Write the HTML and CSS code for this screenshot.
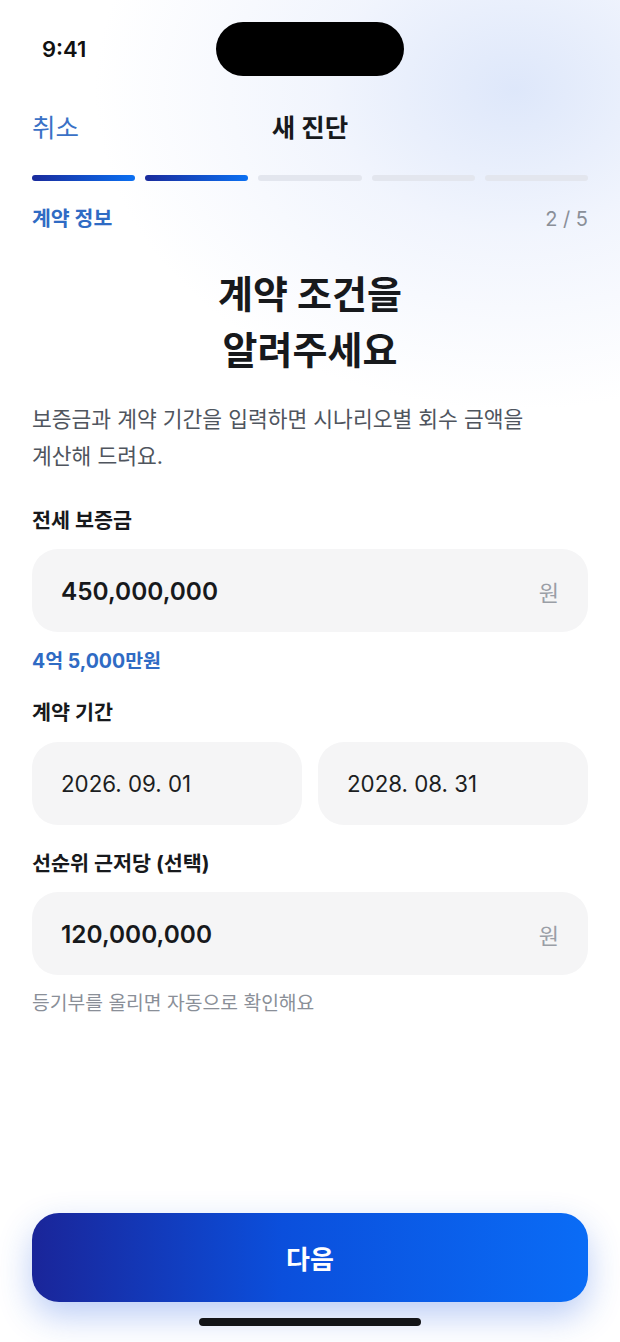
FILE: index.html
```html
<!DOCTYPE html>
<html lang="ko">
<head>
  <meta charset="UTF-8">
  <meta name="viewport" content="width=device-width, initial-scale=1.0">
  <title>새 진단</title>
  <link rel="stylesheet" href="styles.css">
</head>
<body>

  <div class="screen">
    <div class="status-bar">
      <span class="time">9:41</span>
      <div class="island"></div>
      <span></span>
    </div>

    <header class="nav">
      <a href="#" class="nav-cancel">취소</a>
      <h1 class="nav-title">새 진단</h1>
      <span></span>
    </header>

    <div class="progress">
      <span class="step done"></span>
      <span class="step done"></span>
      <span class="step"></span>
      <span class="step"></span>
      <span class="step"></span>
    </div>

    <div class="step-row">
      <span class="step-name">계약 정보</span>
      <span class="step-count">2 / 5</span>
    </div>

    <h2 class="headline">계약 조건을<br>알려주세요</h2>

    <p class="lead">보증금과 계약 기간을 입력하면 시나리오별 회수 금액을<br>계산해 드려요.</p>

    <form class="fields">
      <div class="field">
        <label class="field-label">전세 보증금</label>
        <div class="input-box">
          <span class="input-value">450,000,000</span>
          <span class="unit">원</span>
        </div>
        <p class="hint hint-blue">4억 5,000만원</p>
      </div>

      <div class="field">
        <label class="field-label">계약 기간</label>
        <div class="date-row">
          <div class="input-box"><span class="date-value">2026. 09. 01</span></div>
          <div class="input-box"><span class="date-value">2028. 08. 31</span></div>
        </div>
      </div>

      <div class="field">
        <label class="field-label">선순위 근저당 (선택)</label>
        <div class="input-box">
          <span class="input-value">120,000,000</span>
          <span class="unit">원</span>
        </div>
        <p class="hint">등기부를 올리면 자동으로 확인해요</p>
      </div>
    </form>

    <footer class="bottom">
      <button type="button" class="next-btn">다음</button>
      <div class="home-indicator"></div>
    </footer>
  </div>

</body>
</html>
```

FILE: styles.css
```css
* {
  margin: 0;
  padding: 0;
  box-sizing: border-box;
}

body {
  font-family: "Inter", "Noto Sans CJK KR", sans-serif;
  color: #17191c;
  background-color: #fff;
}

.screen {
  width: 620px;
  height: 1342px;
  display: flex;
  flex-direction: column;
  overflow: hidden;
  background:
    radial-gradient(ellipse 420px 320px at 515px 90px, rgba(220, 230, 250, 0.95) 0%, rgba(232, 238, 252, 0.6) 45%, rgba(255, 255, 255, 0) 100%),
    #fff;
}

/* status bar */
.status-bar {
  display: grid;
  grid-template-columns: 1fr auto 1fr;
  align-items: center;
  padding: 22px 0 20px 0;
}

.time {
  padding-left: 42px;
  font-size: 22px;
  font-weight: 600;
  color: #111;
}

.island {
  width: 188px;
  height: 54px;
  border-radius: 27px;
  background-color: #000;
}

/* nav */
.nav {
  display: grid;
  grid-template-columns: 1fr auto 1fr;
  align-items: center;
  height: 58px;
  padding: 0 32px;
}

.nav-cancel {
  font-size: 25.5px;
  color: #3a71c6;
  text-decoration: none;
}

.nav-title {
  font-size: 25.5px;
  font-weight: 700;
  color: #17191c;
}

/* progress */
.progress {
  display: flex;
  gap: 10px;
  padding: 0 32px;
  margin-top: 21px;
}

.step {
  flex: 1;
  height: 6px;
  border-radius: 3px;
  background-color: #e3e6ee;
}

.step.done {
  background: linear-gradient(90deg, #1a2b9c, #0b70f2);
}

.step-row {
  display: flex;
  justify-content: space-between;
  padding: 0 32px;
  margin-top: 25px;
  line-height: 26px;
  font-size: 20.5px;
}

.step-name {
  font-weight: 700;
  color: #2f6bc4;
}

.step-count {
  font-size: 20px;
  color: #8a8f98;
}

/* headline */
.headline {
  margin-top: 34px;
  text-align: center;
  font-size: 38px;
  line-height: 56px;
  font-weight: 700;
  color: #17191c;
}

.lead {
  margin-top: 23px;
  padding: 0 32px;
  font-size: 21.5px;
  line-height: 37px;
  color: #4f555e;
}

/* fields */
.fields {
  padding: 0 32px;
}

.field-label {
  display: block;
  font-size: 20.7px;
  line-height: 26px;
  font-weight: 700;
  color: #17191c;
}

.field:nth-child(1) .field-label {
  margin-top: 33px;
}

.field:nth-child(2) .field-label {
  margin-top: 27px;
}

.field:nth-child(3) .field-label {
  margin-top: 26px;
}

.input-box {
  display: flex;
  align-items: center;
  justify-content: space-between;
  height: 83px;
  margin-top: 15px;
  padding: 0 29px;
  border-radius: 26px;
  background-color: #f5f5f6;
}

.input-value {
  font-size: 24.4px;
  font-weight: 600;
  color: #17191c;
}

.unit {
  font-size: 22px;
  color: #9a9ea6;
}

.date-row {
  display: grid;
  grid-template-columns: 1fr 1fr;
  gap: 16px;
  margin-top: 16px;
}

.date-row .input-box {
  margin-top: 0;
}

.date-value {
  font-size: 22.3px;
  color: #1c1e22;
}

.hint {
  margin-top: 16px;
  font-size: 19.3px;
  line-height: 24px;
  color: #8a8f98;
}

.hint-blue {
  margin-top: 17px;
  font-size: 19.5px;
  font-weight: 700;
  color: #2f6bc4;
}

/* bottom */
.bottom {
  margin-top: auto;
  padding: 0 32px 16px;
  display: flex;
  flex-direction: column;
  align-items: center;
}

.next-btn {
  width: 100%;
  height: 89px;
  border: none;
  border-radius: 27px;
  background: linear-gradient(90deg, #1a2599, #0b4fdc 45%, #0a6cf6);
  box-shadow: 0 14px 34px rgba(30, 90, 225, 0.3);
  color: #fff;
  font-family: inherit;
  font-size: 26px;
  font-weight: 700;
  cursor: pointer;
}

.home-indicator {
  width: 222px;
  height: 8px;
  margin-top: 16px;
  border-radius: 4px;
  background-color: #141518;
}
```
